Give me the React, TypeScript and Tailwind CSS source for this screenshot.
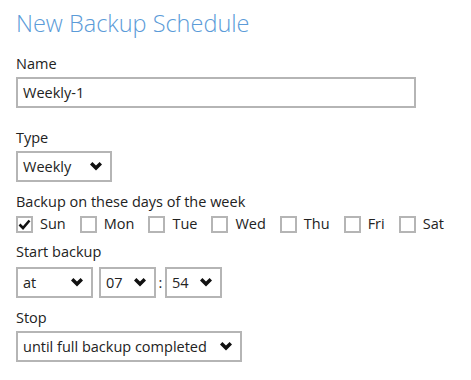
import React from "react";

const Chevron = () => (
  <svg width="12" height="9" viewBox="0 0 12 9" className="shrink-0">
    <polygon points="0,2.4 2.4,0 6,3.6 9.6,0 12,2.4 6,8.4" fill="#111" />
  </svg>
);

const Select = ({ value, w }: { value: string; w: string }) => (
  <div className={`${w} h-[31px] border-2 border-[#b5b5b5] flex items-center justify-between pl-[5px] pr-[8px] bg-white`}>
    <span>{value}</span>
    <Chevron />
  </div>
);

const Day = ({ label, checked }: { label: string; checked?: boolean }) => (
  <div className="flex items-center gap-[7px]">
    <div className="w-[17px] h-[17px] border-2 border-[#b5b5b5] flex items-center justify-center bg-white">
      {checked && (
        <svg width="13" height="11" viewBox="0 0 13 11">
          <polyline points="1.5,5.5 5,9 11.5,1.5" fill="none" stroke="#111" strokeWidth="2.6" />
        </svg>
      )}
    </div>
    <span>{label}</span>
  </div>
);

export default function App() {
  return (
    <div
      className="w-[471px] h-[380px] bg-white pl-[16px] text-[14.5px] text-[#222] leading-[20px]"
      style={{ fontFamily: '"Open Sans", sans-serif' }}
    >
      <div className="pt-[7px] text-[23.5px] leading-[32px] font-light text-[#5b9bd8]">New Backup Schedule</div>
      <div className="mt-[15px]">Name</div>
      <div className="mt-[3px] w-[400px] h-[31px] border-2 border-[#b5b5b5] flex items-center pl-[5px]">Weekly-1</div>
      <div className="mt-[20px]">Type</div>
      <div className="mt-[3px]">
        <Select value="Weekly" w="w-[96px]" />
      </div>
      <div className="mt-[10px]">Backup on these days of the week</div>
      <div className="mt-[2px] flex items-center gap-[14px]">
        <Day label="Sun" checked />
        <Day label="Mon" />
        <Day label="Tue" />
        <Day label="Wed" />
        <Day label="Thu" />
        <Day label="Fri" />
        <Day label="Sat" />
      </div>
      <div className="mt-[8px]">Start backup</div>
      <div className="mt-[5px] flex items-center">
        <Select value="at" w="w-[77px]" />
        <div className="ml-[6px]">
          <Select value="07" w="w-[57px]" />
        </div>
        <span className="mx-[2px] w-[5px] text-center">:</span>
        <Select value="54" w="w-[57px]" />
      </div>
      <div className="mt-[10px]">Stop</div>
      <div className="mt-[3px]">
        <Select value="until full backup completed" w="w-[226px]" />
      </div>
    </div>
  );
}
